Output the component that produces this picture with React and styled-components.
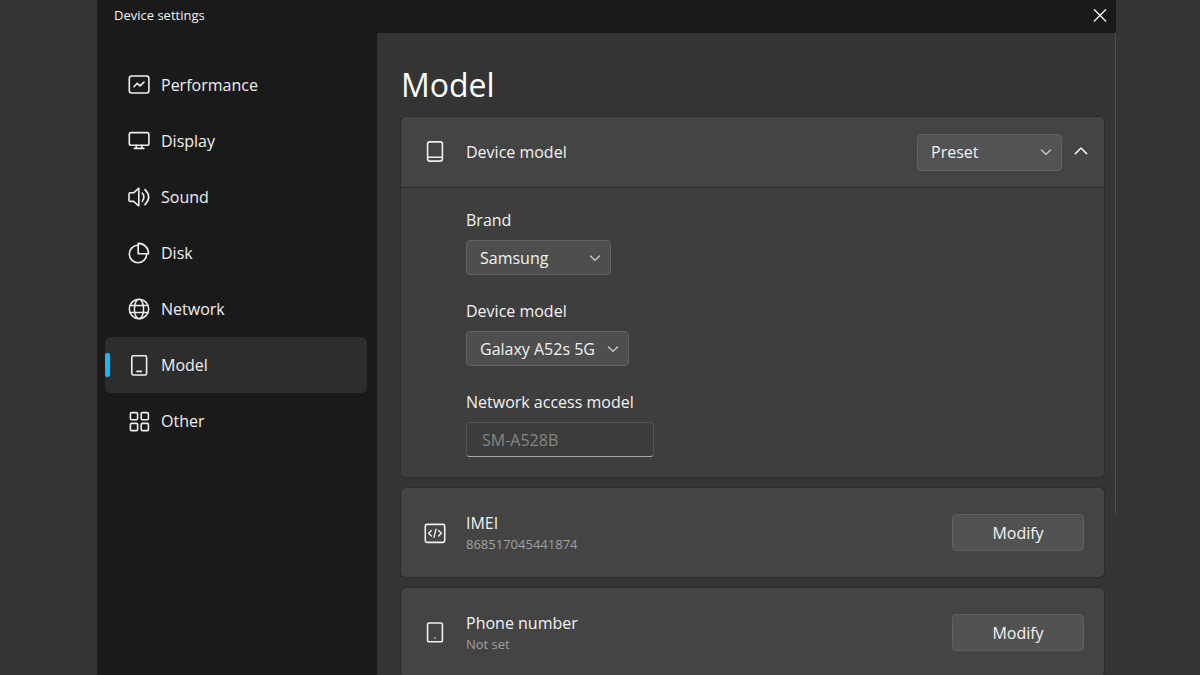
import React from "react";
import styled, { createGlobalStyle } from "styled-components";

const GlobalStyle = createGlobalStyle`
  *, *::before, *::after { box-sizing: border-box; }
  html, body { margin: 0; height: 100%; background: #343434; }
  body, button, input, select {
    font-family: "Open Sans", "Noto Sans", sans-serif;
    font-size: 16px;
    line-height: 24px;
    color: #f2f2f2;
  }
`;

const Page = styled.div`
  height: 100vh;
  padding: 0 84px 0 97px;
  background: #343434;
`;

const Window = styled.div`
  display: flex;
  flex-direction: column;
  height: 100%;
  overflow: hidden;
`;

const TitleBar = styled.header`
  display: flex;
  flex: none;
  align-items: center;
  justify-content: space-between;
  height: 33px;
  padding: 0 4px 4px 17px;
  background: #1a1a1a;
  font-size: 13px;
`;

const IconButton = styled.button`
  display: flex;
  align-items: center;
  justify-content: center;
  width: 24px;
  height: 24px;
  padding: 0;
  border: 0;
  background: none;
  cursor: pointer;
`;

const Columns = styled.div`
  display: flex;
  flex: 1;
  min-height: 0;
`;

const Sidebar = styled.nav`
  display: flex;
  flex: none;
  flex-direction: column;
  width: 280px;
  padding: 24px 10px 0 8px;
  background: #1a1a1a;
`;

const NavItem = styled.a`
  position: relative;
  display: flex;
  align-items: center;
  gap: 11px;
  height: 56px;
  padding-left: 23px;
  border-radius: 5px;
  background: ${(p) => (p.$active ? "#2d2d2d" : "transparent")};
  color: #f0f0f0;
  text-decoration: none;

  &::before {
    content: "";
    position: absolute;
    left: 0;
    top: 16px;
    display: ${(p) => (p.$active ? "block" : "none")};
    width: 5px;
    height: 24px;
    border-radius: 2px;
    background: #17b9ee;
  }
`;

const Content = styled.main`
  flex: 1;
  min-width: 0;
  padding: 28px 11px 12px 24px;
  overflow-y: auto;
  scrollbar-width: none;
`;

const ScrollThumb = styled.div`
  flex: none;
  width: 1px;
  height: 75%;
  background: #4c4c4c;
`;

const Heading = styled.h1`
  margin: 0 0 8px;
  font-size: 32px;
  font-weight: 400;
  line-height: 48px;
  color: #fff;
`;

const Card = styled.section`
  margin-bottom: 11px;
  border-radius: 5px;
  background: #444;
  box-shadow: 0 0 0 1px #2c2c2c;
`;

const CardRow = styled.div`
  display: flex;
  align-items: center;
  height: ${(p) => p.$height}px;
  padding: 0 ${(p) => (p.$expandable ? 11 : 20)}px 0 23px;
`;

const CardText = styled.div`
  flex: 1;
  margin-left: 20px;
`;

const HeaderControls = styled.div`
  display: flex;
  align-items: center;
  gap: 7px;
`;

const RowTitle = styled.div`
  line-height: ${(p) => (p.$tight ? 22 : 24)}px;
`;

const RowDetail = styled.div`
  font-size: 13px;
  line-height: 20px;
  color: #a0a0a0;
`;

const CardBody = styled.div`
  display: flex;
  flex-direction: column;
  align-items: flex-start;
  gap: 24px;
  padding: 20px 20px 20px 65px;
  border-top: 1px solid #2c2c2c;
  border-radius: 0 0 5px 5px;
  background: #3e3e3e;
`;

const Field = styled.div`
  display: flex;
  flex-direction: column;
  gap: 8px;
`;

const SelectWrap = styled.div`
  position: relative;
  width: ${(p) => p.$width}px;
  height: ${(p) => p.$height}px;

  svg {
    position: absolute;
    right: 10px;
    top: 50%;
    margin-top: -6px;
    pointer-events: none;
    stroke: #cfcfcf;
  }
`;

const Select = styled.select`
  appearance: none;
  width: 100%;
  height: 100%;
  padding: 0 28px 0 13px;
  border: 1px solid #626262;
  border-radius: 4px;
  background: ${(p) => (p.$raised ? "#535353" : "#4e4e4e")};
`;

const TextInput = styled.input`
  width: 188px;
  height: 35px;
  padding: 0 15px;
  border: 1px solid #565656;
  border-bottom-color: #a6a6a6;
  border-radius: 4px;
  background: #3c3c3c;

  &::placeholder { color: #858585; opacity: 1; }
`;

const ModifyButton = styled.button`
  width: 132px;
  height: 37px;
  padding: 0;
  border: 1px solid #5f5f5f;
  border-radius: 4px;
  background: #525252;
  cursor: pointer;
`;

const Svg = styled.svg`
  display: block;
  flex: none;
  fill: none;
  stroke: #efefef;
  stroke-width: 1.6;
  stroke-linecap: round;
  stroke-linejoin: round;
`;

const shapes = {
  performance: (
    <>
      <rect x="1.3" y="2" width="19.6" height="17" rx="2.4" />
      <path d="M6 12.7 L9.3 9.3 L12 11.8 L16 8.1" />
    </>
  ),
  display: (
    <>
      <rect x="1.3" y="2.6" width="19.6" height="12.6" rx="1.8" />
      <path d="M8.3 15.4 V18.2 M13.9 15.4 V18.2 M6.3 18.4 H15.9" />
    </>
  ),
  sound: (
    <>
      <path d="M10.8 2.2 V19.8 L5.6 15.4 H2.4 Q1 15.4 1 14 V8.2 Q1 6.8 2.4 6.8 H5.6 Z" />
      <path d="M14.3 7 Q17.5 11 14.3 15.2 M17 3.6 Q24.4 11 17 18.6" />
    </>
  ),
  disk: (
    <>
      <path d="M10 3.3 A8.7 8.7 0 1 0 18.7 12" />
      <path d="M10.2 1.4 V11.8 H20.6 A10.2 10.2 0 0 0 10.2 1.4 Z" />
    </>
  ),
  network: (
    <g strokeWidth="1.5">
      <circle cx="11" cy="11" r="9.7" />
      <ellipse cx="11" cy="11" rx="4.6" ry="9.7" />
      <path d="M2.2 7.6 H19.8 M2.2 14.4 H19.8" />
    </g>
  ),
  model: (
    <>
      <rect x="3.8" y="1.8" width="14.8" height="19.2" rx="1.6" />
      <path d="M9 17.4 H13.4" />
    </>
  ),
  other: (
    <>
      <rect x="2.4" y="2.6" width="7.2" height="7.2" rx="1.2" />
      <rect x="13.2" y="2.6" width="7.2" height="7.2" rx="1.2" />
      <rect x="2.4" y="13.4" width="7.2" height="7.2" rx="1.2" />
      <rect x="13.2" y="13.4" width="7.2" height="7.2" rx="1.2" />
    </>
  ),
  device: (
    <>
      <rect x="3.6" y="0.9" width="14.8" height="19.2" rx="2" />
      <path d="M3.8 16.2 H18.2" />
    </>
  ),
  code: (
    <>
      <rect x="1.3" y="2.4" width="19.4" height="18" rx="1.6" />
      <path strokeWidth="1.4" d="M7.4 8.4 L4.6 11.2 L7.4 14 M14.6 8.4 L17.4 11.2 L14.6 14 M12 7.2 L10 15.2" />
    </>
  ),
  phone: (
    <>
      <rect x="3.6" y="1" width="14.8" height="18.8" rx="1.4" />
      <path d="M11 16 H11.1" />
    </>
  ),
};

const Icon = ({ name }) => (
  <Svg width="22" height="22" viewBox="0 0 22 22" aria-hidden="true">
    {shapes[name]}
  </Svg>
);

const ChevronDown = () => (
  <Svg width="12" height="12" viewBox="0 0 12 12" aria-hidden="true">
    <path strokeWidth="1.3" d="M1.5 4 L6 8.4 L10.5 4" />
  </Svg>
);

const Dropdown = ({ id, label, value, width, height = 35, raised }) => (
  <SelectWrap $width={width} $height={height}>
    <Select id={id} aria-label={label} defaultValue={value} $raised={raised}>
      <option>{value}</option>
    </Select>
    <ChevronDown />
  </SelectWrap>
);

const navItems = [
  ["performance", "Performance"],
  ["display", "Display"],
  ["sound", "Sound"],
  ["disk", "Disk"],
  ["network", "Network"],
  ["model", "Model"],
  ["other", "Other"],
];

const InfoCard = ({ icon, title, detail }) => (
  <Card>
    <CardRow $height={89}>
      <Icon name={icon} />
      <CardText>
        <RowTitle $tight>{title}</RowTitle>
        <RowDetail>{detail}</RowDetail>
      </CardText>
      <ModifyButton type="button" aria-label={`Modify ${title}`}>
        Modify
      </ModifyButton>
    </CardRow>
  </Card>
);

export default function App() {
  return (
    <Page>
      <GlobalStyle />
      <Window>
        <TitleBar>
          <span>Device settings</span>
          <IconButton type="button" aria-label="Close">
            <Svg width="14" height="14" viewBox="0 0 14 14" aria-hidden="true">
              <path strokeWidth="1.4" d="M1.4 1.8 L12.6 13 M12.6 1.8 L1.4 13" />
            </Svg>
          </IconButton>
        </TitleBar>
        <Columns>
          <Sidebar>
            {navItems.map(([id, text]) => (
              <NavItem
                key={id}
                href={`#${id}`}
                $active={id === "model"}
                aria-current={id === "model" ? "page" : undefined}
              >
                <Icon name={id} />
                {text}
              </NavItem>
            ))}
          </Sidebar>
          <Content>
            <Heading>Model</Heading>
            <Card>
              <CardRow $height={70} $expandable>
                <Icon name="device" />
                <CardText>
                  <RowTitle>Device model</RowTitle>
                </CardText>
                <HeaderControls>
                  <Dropdown label="Device model source" value="Preset" width={145} height={37} raised />
                  <IconButton type="button" aria-label="Collapse">
                    <Svg width="14" height="14" viewBox="0 0 14 14" aria-hidden="true">
                      <path d="M1.4 8.6 L7 3 L12.6 8.6" />
                    </Svg>
                  </IconButton>
                </HeaderControls>
              </CardRow>
              <CardBody>
                <Field>
                  <label htmlFor="brand">Brand</label>
                  <Dropdown id="brand" value="Samsung" width={145} />
                </Field>
                <Field>
                  <label htmlFor="device-model">Device model</label>
                  <Dropdown id="device-model" value="Galaxy A52s 5G" width={163} />
                </Field>
                <Field>
                  <label htmlFor="network-model">Network access model</label>
                  <TextInput id="network-model" placeholder="SM-A528B" />
                </Field>
              </CardBody>
            </Card>
            <InfoCard icon="code" title="IMEI" detail="868517045441874" />
            <InfoCard icon="phone" title="Phone number" detail="Not set" />
          </Content>
          <ScrollThumb />
        </Columns>
      </Window>
    </Page>
  );
}
